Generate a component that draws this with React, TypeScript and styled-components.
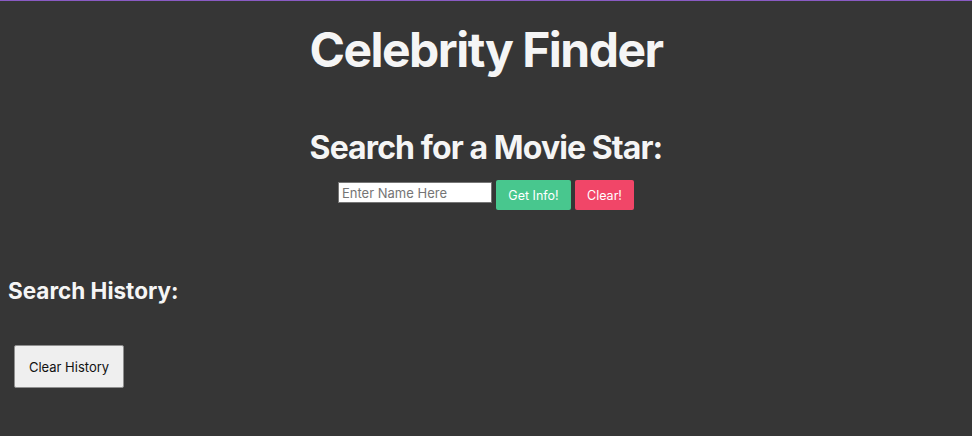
import React from "react";
import styled, { createGlobalStyle } from "styled-components";

const Global = createGlobalStyle`
  html, body { margin: 0; padding: 0; background: #363636; }
  body { font-family: Inter, "Noto Sans", sans-serif; color: #f5f5f5; }
`;

const Page = styled.div`
  min-height: 436px;
  box-sizing: border-box;
  border-top: 1px solid #8a5bc4;
  padding: 0 8px;
`;

const Title = styled.h1`
  margin: 20px 0 0;
  text-align: center;
  font-size: 48px;
  font-weight: 700;
  letter-spacing: -1.5px;
  line-height: 58px;
  color: #f5f5f5;
`;

const SearchSection = styled.section`
  display: flex;
  flex-direction: column;
  align-items: center;
  margin-top: 49px;
`;

const SubTitle = styled.h2`
  margin: 0;
  font-size: 32px;
  font-weight: 700;
  letter-spacing: -0.9px;
  line-height: 40px;
  color: #f5f5f5;
`;

const Controls = styled.div`
  display: flex;
  align-items: flex-start;
  gap: 4px;
  margin-top: 12px;
`;

const NameInput = styled.input`
  width: 154px;
  height: 21px;
  margin-top: 2px;
  box-sizing: border-box;
  border: 1px solid #767676;
  border-radius: 0;
  padding: 1px 3px;
  font-family: Inter, sans-serif;
  font-size: 13px;
  background: #fff;
  &::placeholder { color: #757575; }
`;

const ColorButton = styled.button<{ $bg: string; $w: number }>`
  width: ${(p) => p.$w}px;
  height: 30px;
  border: none;
  border-radius: 2px;
  background: ${(p) => p.$bg};
  color: #fff;
  font-family: Inter, sans-serif;
  font-size: 12.5px;
  padding: 0;
`;

const HistoryTitle = styled.h3`
  margin: 66px 0 0;
  font-size: 22.5px;
  font-weight: 700;
  line-height: 30px;
  color: #f5f5f5;
`;

const ClearHistory = styled.button`
  margin: 39px 0 0 6px;
  width: 110px;
  height: 43px;
  background: #efefef;
  border: 1px solid #8f8f8f;
  border-radius: 2px;
  color: #111;
  font-family: Inter, sans-serif;
  font-size: 13px;
`;

export default function App() {
  return (
    <>
      <Global />
      <Page>
        <Title>Celebrity Finder</Title>
        <SearchSection>
          <SubTitle>Search for a Movie Star:</SubTitle>
          <Controls>
            <NameInput placeholder="Enter Name Here" />
            <ColorButton $bg="#48c78e" $w={75}>Get Info!</ColorButton>
            <ColorButton $bg="#f14668" $w={59}>Clear!</ColorButton>
          </Controls>
        </SearchSection>
        <HistoryTitle>Search History:</HistoryTitle>
        <ClearHistory>Clear History</ClearHistory>
      </Page>
    </>
  );
}
